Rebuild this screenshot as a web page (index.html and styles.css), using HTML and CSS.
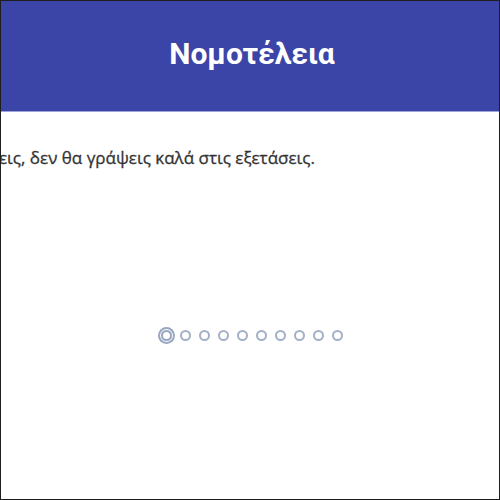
FILE: index.html
```html
<!DOCTYPE html>
<html lang="el">
<head>
<meta charset="utf-8">
<link rel="stylesheet" href="styles.css">
</head>
<body>
<div class="frame">
  <header class="header"><h1 class="title">Νομοτέλεια</h1></header>
  <main class="content">
    <div class="slide">
      <p class="quote">Αν δεν διαβάζεις, δεν θα γράψεις καλά στις εξετάσεις.</p>
    </div>
    <div class="dots">
      <span class="dot active"></span>
      <span class="dot"></span>
      <span class="dot"></span>
      <span class="dot"></span>
      <span class="dot"></span>
      <span class="dot"></span>
      <span class="dot"></span>
      <span class="dot"></span>
      <span class="dot"></span>
      <span class="dot"></span>
    </div>
  </main>
</div>
</body>
</html>
```
FILE: styles.css
```css
html, body { margin: 0; padding: 0; background: #fff; }
.frame {
  width: 500px; height: 500px; box-sizing: border-box;
  border: 1px solid #1e1e1e;
  display: flex; flex-direction: column; overflow: hidden;
  font-family: Roboto, "Liberation Sans", Arial, sans-serif;
}
.header {
  height: 110px; background: #3b44a7;
  display: flex; align-items: center; justify-content: center;
  border-bottom: 1px solid #9fa4d8;
  flex: none;
}
.title {
  margin: 0; color: #fff; font-size: 30px; font-weight: 700;
  padding-bottom: 6px; padding-left: 4px;
}
.content { flex: 1; display: flex; flex-direction: column; }
.slide {
  width: 314px; overflow: hidden; display: flex; justify-content: flex-end;
  padding-top: 34px; height: 42px;
}
.quote {
  margin: 0; white-space: nowrap; font-size: 17px; color: #333;
  font-family: "Open Sans", "Noto Sans", sans-serif;
  -webkit-text-stroke: 0.3px #333;
}
.dots {
  display: flex; align-items: center; gap: 8px;
  margin-top: 142px; padding-left: 158px;
}
.dot {
  width: 7px; height: 7px; border: 2px solid #a3b0c6; border-radius: 50%;
  box-sizing: content-box;
}
.dot.active {
  border-color: #98a6c0;
  box-shadow: 0 0 0 1px #fff, 0 0 0 3px #98a6c0;
  margin-left: 2px;
}
```
